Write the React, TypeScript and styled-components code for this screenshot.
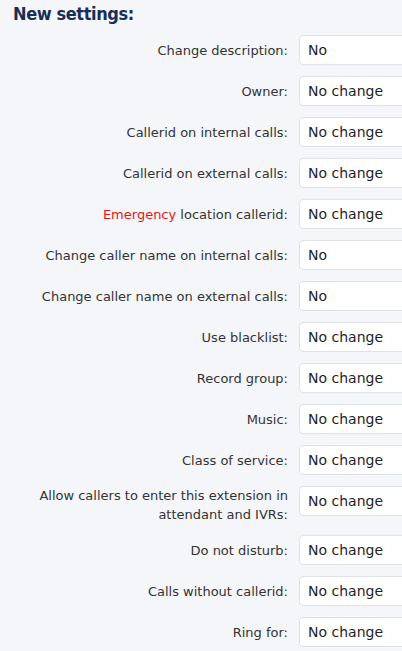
import React from 'react';
import styled, { createGlobalStyle } from 'styled-components';

const GlobalStyle = createGlobalStyle`
	html, body {
		margin: 0;
		padding: 0;
		background: #f5f6fa;
		overflow: hidden;
	}
	body {
		font-family: 'DejaVu Sans', Verdana, sans-serif;
	}
`;

const Page = styled.div`
	width: 402px;
	height: 651px;
	overflow: hidden;
	padding: 0 0 0 13px;
	box-sizing: border-box;
`;

const Heading = styled.h2`
	margin: 0;
	padding-top: 3px;
	height: 31px;
	box-sizing: border-box;
	font-family: 'DejaVu Sans Condensed', 'DejaVu Sans', sans-serif;
	font-stretch: condensed;
	font-size: 18px;
	letter-spacing: -0.4px;
	font-weight: bold;
	color: #172f55;
	line-height: 21px;
`;

const Form = styled.div`
	display: grid;
	grid-template-columns: 256px 220px;
	column-gap: 11px;
	row-gap: 11px;
	margin-left: 19px;
	margin-top: 4px;
`;

const Label = styled.div`
	min-height: 30px;
	display: flex;
	align-items: center;
	justify-content: flex-end;
	text-align: right;
	font-size: 13px;
	line-height: 19px;
	color: #333;
`;

const Warn = styled.span`
	color: #e3131b;
`;

const Select = styled.div`
	height: 30px;
	box-sizing: border-box;
	background: #fff;
	border: 1px solid #dfe2e8;
	border-radius: 4px;
	padding: 0 8px;
	display: flex;
	align-items: center;
	font-size: 14px;
	color: #1f1f1f;
	align-self: start;
`;

const rows: { label: React.ReactNode; value: string }[] = [
	{ label: 'Change description:', value: 'No' },
	{ label: 'Owner:', value: 'No change' },
	{ label: 'Callerid on internal calls:', value: 'No change' },
	{ label: 'Callerid on external calls:', value: 'No change' },
	{
		label: (
			<span>
				<Warn>Emergency</Warn> location callerid:
			</span>
		),
		value: 'No change',
	},
	{ label: 'Change caller name on internal calls:', value: 'No' },
	{ label: 'Change caller name on external calls:', value: 'No' },
	{ label: 'Use blacklist:', value: 'No change' },
	{ label: 'Record group:', value: 'No change' },
	{ label: 'Music:', value: 'No change' },
	{ label: 'Class of service:', value: 'No change' },
	{ label: 'Allow callers to enter this extension in attendant and IVRs:', value: 'No change' },
	{ label: 'Do not disturb:', value: 'No change' },
	{ label: 'Calls without callerid:', value: 'No change' },
	{ label: 'Ring for:', value: 'No change' },
];

export default function App() {
	return (
		<>
			<GlobalStyle />
			<Page>
				<Heading>New settings:</Heading>
				<Form>
					{rows.map((row, i) => (
						<React.Fragment key={i}>
							<Label>{row.label}</Label>
							<Select>{row.value}</Select>
						</React.Fragment>
					))}
				</Form>
			</Page>
		</>
	);
}
